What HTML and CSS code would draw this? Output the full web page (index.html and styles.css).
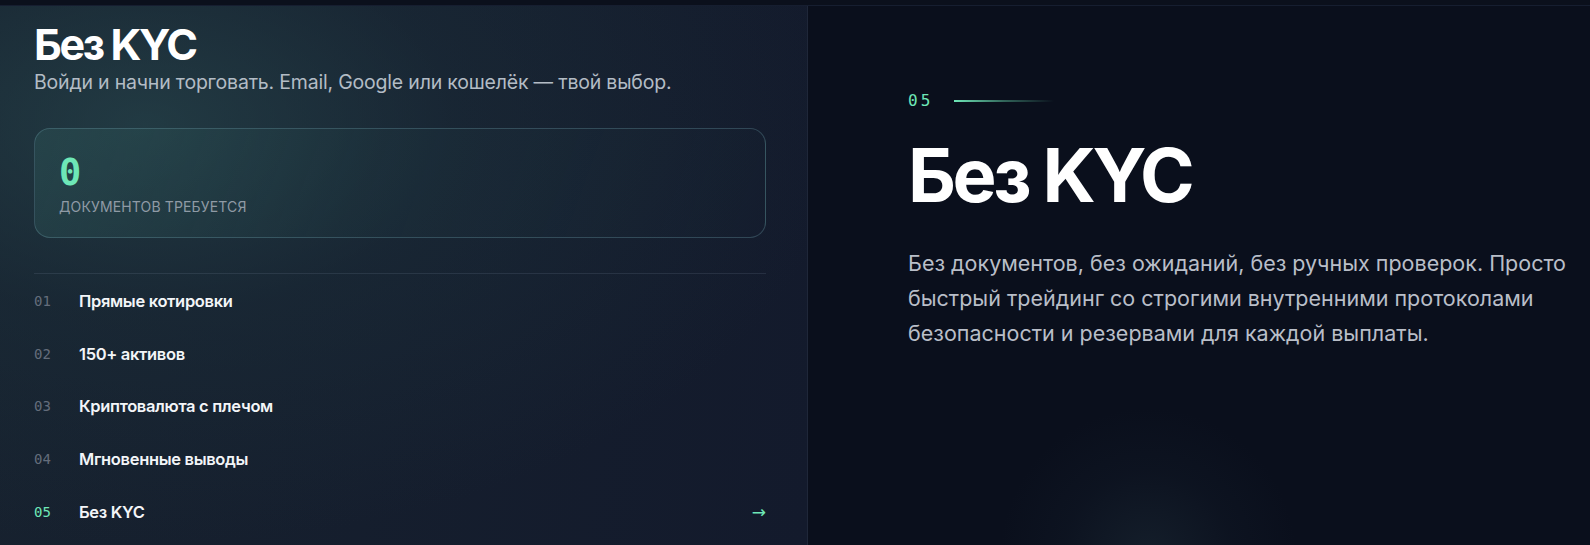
FILE: index.html
```html
<!DOCTYPE html>
<html lang="ru">
<head>
<meta charset="utf-8">
<title>Без KYC</title>
<link rel="stylesheet" href="styles.css">
</head>
<body>
<div class="topbar"></div>
<section class="feature">
  <div class="left">
    <h2 class="left-title">Без KYC</h2>
    <p class="left-sub">Войди и начни торговать. Email, Google или кошелёк — твой выбор.</p>
    <div class="stat-card">
      <div class="stat-value">0</div>
      <div class="stat-label">Документов требуется</div>
    </div>
    <ul class="list">
      <li class="row"><span class="num">01</span><span class="label">Прямые котировки</span></li>
      <li class="row"><span class="num">02</span><span class="label">150+ активов</span></li>
      <li class="row"><span class="num">03</span><span class="label">Криптовалюта с плечом</span></li>
      <li class="row"><span class="num">04</span><span class="label">Мгновенные выводы</span></li>
      <li class="row active"><span class="num">05</span><span class="label">Без KYC</span><span class="arrow">→</span></li>
    </ul>
  </div>
  <div class="right">
    <div class="glow"></div>
    <div class="eyebrow"><span class="eyebrow-num">05</span><span class="eyebrow-line"></span></div>
    <h1 class="right-title">Без KYC</h1>
    <p class="right-text">Без документов, без ожиданий, без ручных проверок. Просто быстрый трейдинг со строгими внутренними протоколами безопасности и резервами для каждой выплаты.</p>
  </div>
</section>
</body>
</html>
```
FILE: styles.css
```css
* { box-sizing: border-box; }
html, body {
  margin: 0;
  padding: 0;
  width: 1590px;
  height: 545px;
  overflow: hidden;
  background: #0a0f1c;
  font-family: Inter, "Noto Sans", sans-serif;
  color: #f5f7fa;
}
.topbar {
  height: 6px;
  background: #0b101c;
  border-bottom: 1px solid #161e30;
}
.feature {
  display: grid;
  grid-template-columns: 808px 1fr;
  height: 539px;
}
.left {
  border-right: 1px solid #1f2739;
  padding: 14px 41px 0 34px;
  background:
    radial-gradient(ellipse 700px 420px at 18% 22%, rgba(40, 72, 78, 0.65) 0%, rgba(30, 52, 62, 0.35) 45%, rgba(18, 25, 42, 0) 100%),
    linear-gradient(100deg, #17222f 0%, #131a2c 100%);
}
.left-title {
  margin: 0;
  font-size: 43px;
  font-weight: 700;
  letter-spacing: -0.055em;
  line-height: 48px;
  color: #ffffff;
}
.left-sub {
  margin: 1px 0 0;
  font-size: 19.5px;
  line-height: 26px;
  color: #b3bcc5;
  letter-spacing: -0.01em;
}
.stat-card {
  margin-top: 33px;
  height: 110px;
  border: 1px solid rgba(110, 160, 170, 0.32);
  border-radius: 16px;
  padding: 24px 24px 0;
  background: linear-gradient(110deg, rgba(50, 95, 95, 0.35) 0%, rgba(35, 65, 72, 0.22) 45%, rgba(25, 35, 52, 0.15) 100%);
}
.stat-value {
  font-family: "DejaVu Sans Mono", monospace;
  font-weight: 700;
  font-size: 37px;
  line-height: 40px;
  color: #6ee7b7;
}
.stat-label {
  margin-top: 5px;
  font-size: 14px;
  line-height: 18px;
  text-transform: uppercase;
  color: #8f9aa5;
  letter-spacing: 0.01em;
}
.list {
  list-style: none;
  margin: 35px 0 0;
  padding: 0;
  border-top: 1px solid rgba(120, 140, 160, 0.18);
}
.row {
  display: flex;
  align-items: center;
  height: 52.7px;
  padding-top: 1px;
}
.num {
  width: 45px;
  font-family: "DejaVu Sans Mono", monospace;
  font-size: 14px;
  color: #646d7b;
}
.label {
  flex: 1;
  font-size: 16.5px;
  font-weight: 600;
  letter-spacing: -0.02em;
  color: #f3f5f8;
}
.row.active .num { color: #6ee7b7; }
.arrow {
  font-family: "DejaVu Sans", sans-serif;
  color: #6ee7b7;
  font-size: 17px;
}
.right {
  position: relative;
  overflow: hidden;
  padding: 85px 0 0 100px;
  background: #0a0f1c;
}
.glow {
  position: absolute;
  left: 190px;
  top: 400px;
  width: 300px;
  height: 300px;
  border-radius: 50%;
  background: radial-gradient(circle, rgba(60, 90, 100, 0.2) 0%, rgba(40, 60, 75, 0.09) 40%, rgba(10, 15, 28, 0) 70%);
}
.eyebrow {
  display: flex;
  align-items: center;
  gap: 20px;
  position: relative;
}
.eyebrow-num {
  font-family: "DejaVu Sans Mono", monospace;
  font-size: 16px;
  letter-spacing: 0.2em;
  color: #6ee7b7;
  line-height: 20px;
}
.eyebrow-line {
  width: 100px;
  height: 2px;
  background: linear-gradient(90deg, #6ee7b7 0%, rgba(110, 231, 183, 0.4) 50%, rgba(110, 231, 183, 0) 100%);
}
.right-title {
  position: relative;
  margin: 19px 0 0;
  font-size: 74px;
  line-height: 90px;
  font-weight: 700;
  letter-spacing: -0.045em;
  color: #ffffff;
}
.right-text {
  position: relative;
  margin: 26px 0 0;
  max-width: 690px;
  font-size: 21.5px;
  line-height: 35px;
  color: #b9bec8;
  letter-spacing: 0;
}
```
